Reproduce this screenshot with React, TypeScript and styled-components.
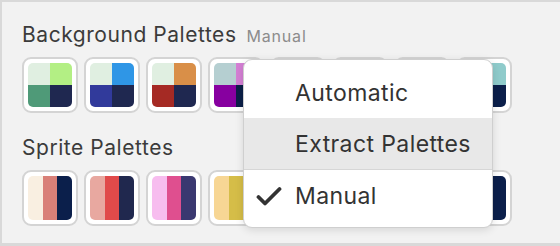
import React from "react";
import styled, { createGlobalStyle } from "styled-components";

const Global = createGlobalStyle`
  html, body { margin: 0; padding: 0; }
  body {
    width: 560px;
    height: 246px;
    overflow: hidden;
    background: #d9d9d9;
    font-family: Inter, "Noto Sans", "Liberation Sans", sans-serif;
    -webkit-font-smoothing: antialiased;
  }
`;

const Panel = styled.div`
  position: relative;
  box-sizing: border-box;
  margin: 2px 0 0 2px;
  width: 558px;
  height: 241px;
  background: #f2f2f2;
  padding: 20px 20px 0 20px;
  display: flex;
  flex-direction: column;
  gap: 22px;
`;

const Section = styled.section`
  display: flex;
  flex-direction: column;
  gap: 9px;
`;

const Header = styled.div`
  display: flex;
  align-items: baseline;
  gap: 10px;
  height: 26px;
`;

const Title = styled.h2`
  margin: 0;
  font-size: 21px;
  letter-spacing: 0.55px;
  line-height: 26px;
  font-weight: 400;
  color: #3b3b3b;
`;

const Sub = styled.span`
  font-size: 16px;
  letter-spacing: 0.8px;
  color: #8c8c8c;
`;

const Row = styled.div`
  display: flex;
  gap: 6px;
`;

const Swatch = styled.div`
  box-sizing: border-box;
  width: 56px;
  height: 56px;
  padding: 4px;
  border: 2px solid #d4d4d4;
  border-radius: 9px;
  background: #ffffff;
`;

const Quad = styled.div`
  width: 44px;
  height: 44px;
  border-radius: 5px;
  overflow: hidden;
  display: grid;
  grid-template-columns: 1fr 1fr;
  grid-template-rows: 1fr 1fr;
`;

const Stripes = styled.div`
  width: 44px;
  height: 44px;
  border-radius: 5px;
  overflow: hidden;
  display: grid;
  grid-template-columns: 1fr 1fr 1fr;
`;

const Cell = styled.div<{ $c: string }>`
  background: ${(p) => p.$c};
`;

const Menu = styled.div`
  position: absolute;
  left: 241px;
  top: 57px;
  width: 250px;
  box-sizing: border-box;
  background: #ffffff;
  border: 1px solid #cfcfcf;
  border-radius: 9px;
  box-shadow: 0 2px 8px rgba(0, 0, 0, 0.12);
  padding: 7px 0 6px;
  overflow: hidden;
`;

const Item = styled.div<{ $active?: boolean; $sep?: boolean }>`
  position: relative;
  height: 51px;
  display: flex;
  align-items: center;
  padding-left: 51px;
  font-size: 23px;
  letter-spacing: 0.4px;
  color: #333333;
  background: ${(p) => (p.$active ? "#e8e8e8" : "transparent")};
  border-top: ${(p) => (p.$sep ? "1px solid #d6d6d6" : "none")};
`;

const Check = styled.svg`
  position: absolute;
  left: 12px;
  top: 50%;
  transform: translateY(-50%);
`;

const bg: string[][] = [
  ["#e0efe1", "#b3ef84", "#4f9a78", "#1f2850"],
  ["#e0efe1", "#2f96e6", "#313a9b", "#1f2850"],
  ["#e0efe1", "#d98f48", "#a52a24", "#1f2850"],
  ["#b5cfd1", "#d47fd4", "#8700a0", "#0b1f48"],
  ["#e0efe1", "#e0e0a0", "#6a8a3a", "#1f2850"],
  ["#e0efe1", "#f0c0c0", "#904040", "#1f2850"],
  ["#e0efe1", "#a0c0f0", "#304080", "#1f2850"],
  ["#e0efe1", "#8fcbcb", "#2a7a7a", "#0b1f4a"],
];

const sprites: string[][] = [
  ["#f9efe1", "#d98078", "#0b1f4b"],
  ["#e8a8a0", "#e04a4a", "#20284e"],
  ["#f7bdef", "#df4f8f", "#3a3870"],
  ["#f7d694", "#d5bd48", "#3a3424"],
  ["#f0e0c0", "#c09060", "#2a2040"],
  ["#e0f0e0", "#60a060", "#203020"],
  ["#e0e0f0", "#7070c0", "#202050"],
  ["#f0e8e0", "#b0a090", "#0b1f4b"],
];

export default function App() {
  return (
    <>
      <Global />
      <Panel>
        <Section>
          <Header>
            <Title>Background Palettes</Title>
            <Sub>Manual</Sub>
          </Header>
          <Row>
            {bg.map((p, i) => (
              <Swatch key={i}>
                <Quad>
                  {p.map((c, j) => (
                    <Cell key={j} $c={c} />
                  ))}
                </Quad>
              </Swatch>
            ))}
          </Row>
        </Section>
        <Section>
          <Header>
            <Title>Sprite Palettes</Title>
          </Header>
          <Row>
            {sprites.map((p, i) => (
              <Swatch key={i}>
                <Stripes>
                  {p.map((c, j) => (
                    <Cell key={j} $c={c} />
                  ))}
                </Stripes>
              </Swatch>
            ))}
          </Row>
        </Section>
        <Menu>
          <Item>Automatic</Item>
          <Item $active>Extract Palettes</Item>
          <Item $sep>
            <Check width="26" height="20" viewBox="0 0 26 20">
              <path d="M2.5 11 L9 17.5 L23.5 3" fill="none" stroke="#333" strokeWidth="3.8" strokeLinecap="round" strokeLinejoin="round" />
            </Check>
            Manual
          </Item>
        </Menu>
      </Panel>
    </>
  );
}
